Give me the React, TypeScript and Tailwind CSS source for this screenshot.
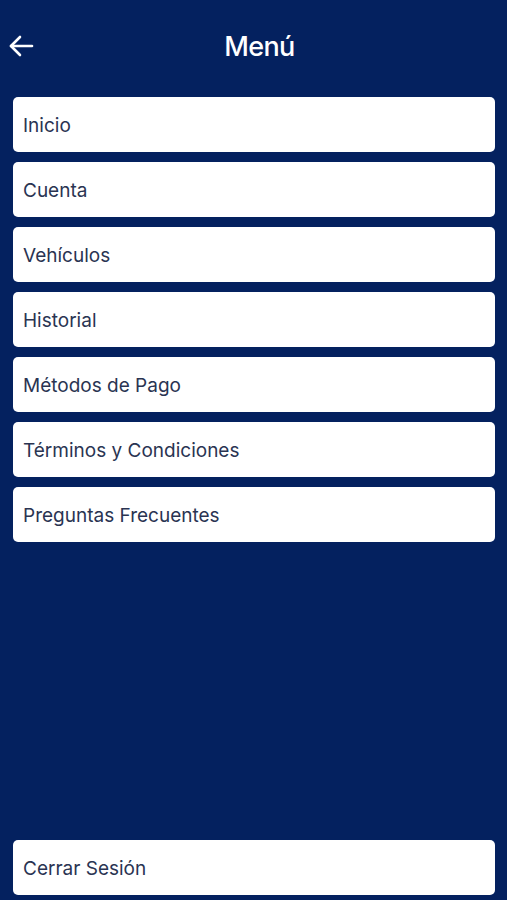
import React from 'react';

const items = [
  'Inicio',
  'Cuenta',
  'Vehículos',
  'Historial',
  'Métodos de Pago',
  'Términos y Condiciones',
  'Preguntas Frecuentes',
];

export default function App() {
  return (
    <div
      className="min-h-[900px] h-[900px] bg-[#04215f] flex flex-col pl-[13px] pr-[12px] pb-[5px]"
      style={{ fontFamily: 'Inter, "Liberation Sans", sans-serif' }}
    >
      {/* Header */}
      <div className="relative h-[92px] flex items-center justify-center shrink-0">
        <button className="absolute left-[-5px] top-[34px] text-white">
          <svg width="26" height="24" viewBox="0 0 26 24" fill="none" stroke="currentColor" strokeWidth="2.6" strokeLinecap="round" strokeLinejoin="round">
            <path d="M24 12H3" />
            <path d="M12 3L3 12l9 9" />
          </svg>
        </button>
        <h1 className="text-white text-[27px] font-medium tracking-tight pl-[11px] pt-[2px]">Menú</h1>
      </div>

      <div className="mt-[5px] flex flex-col gap-[10px]">
        {items.map((label) => (
          <MenuItem key={label} label={label} />
        ))}
      </div>

      <div className="flex-1" />

      <MenuItem label="Cerrar Sesión" />
    </div>
  );
}

function MenuItem({ label }: { label: string }) {
  return (
    <div className="h-[55px] bg-white rounded-[5px] flex items-center px-[10px] pt-[3px]">
      <span className="text-[19px] text-[#2a3452]">{label}</span>
    </div>
  );
}
